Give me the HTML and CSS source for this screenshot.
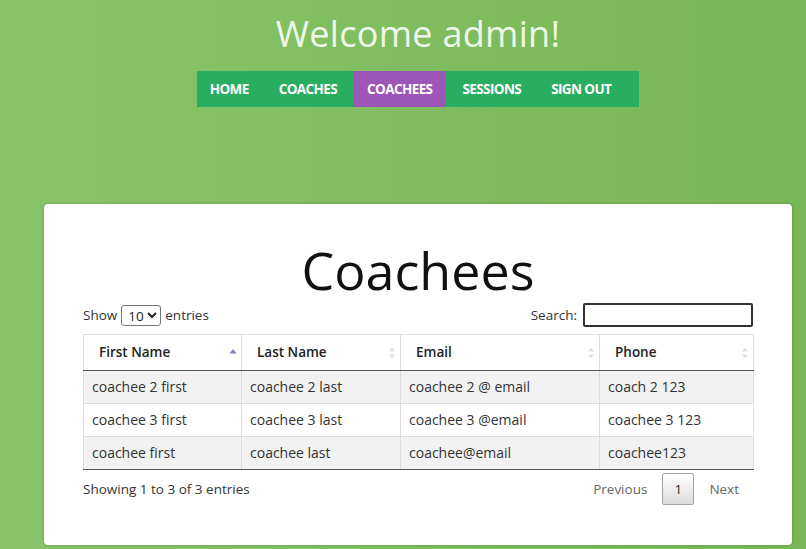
FILE: index.html
```html
<!DOCTYPE html>
<html lang="en">
<head>
<meta charset="utf-8">
<title>Coachees</title>
<link rel="stylesheet" href="styles.css">
</head>
<body>
<div class="page">
  <header class="top">
    <h1 class="welcome">Welcome admin!</h1>
    <nav class="nav">
      <a class="nav-item" href="#">HOME</a>
      <a class="nav-item" href="#">COACHES</a>
      <a class="nav-item active" href="#">COACHEES</a>
      <a class="nav-item" href="#">SESSIONS</a>
      <a class="nav-item" href="#">SIGN OUT</a>
    </nav>
  </header>
  <main class="card">
    <h2 class="card-title">Coachees</h2>
    <div class="controls">
      <label class="length">Show <select class="length-select"><option>10</option><option>25</option><option>50</option><option>100</option></select> entries</label>
      <label class="search">Search: <input class="search-input" type="search"></label>
    </div>
    <table class="dt">
      <colgroup>
        <col class="c1"><col class="c2"><col class="c3"><col class="c4">
      </colgroup>
      <thead>
        <tr>
          <th class="sort-asc">First Name<svg class="sort-icon" viewBox="0 0 8 14" width="8" height="14"><path d="M4 3 L7.5 7.5 L0.5 7.5 Z" fill="#7e7ed0"/></svg></th>
          <th>Last Name<svg class="sort-icon" viewBox="0 0 8 14" width="8" height="14"><path d="M4 1.5 L7 5.5 L1 5.5 Z M4 12.5 L7 8.5 L1 8.5 Z" fill="#dcdce4"/></svg></th>
          <th>Email<svg class="sort-icon" viewBox="0 0 8 14" width="8" height="14"><path d="M4 1.5 L7 5.5 L1 5.5 Z M4 12.5 L7 8.5 L1 8.5 Z" fill="#dcdce4"/></svg></th>
          <th>Phone<svg class="sort-icon" viewBox="0 0 8 14" width="8" height="14"><path d="M4 1.5 L7 5.5 L1 5.5 Z M4 12.5 L7 8.5 L1 8.5 Z" fill="#dcdce4"/></svg></th>
        </tr>
      </thead>
      <tbody>
        <tr class="odd"><td>coachee 2 first</td><td>coachee 2 last</td><td>coachee 2 @ email</td><td>coach 2 123</td></tr>
        <tr class="even"><td>coachee 3 first</td><td>coachee 3 last</td><td>coachee 3 @email</td><td>coachee 3 123</td></tr>
        <tr class="odd"><td>coachee first</td><td>coachee last</td><td>coachee@email</td><td>coachee123</td></tr>
      </tbody>
    </table>
    <div class="footer">
      <div class="info">Showing 1 to 3 of 3 entries</div>
      <div class="paging">
        <span class="page-link disabled">Previous</span>
        <span class="page-btn current">1</span>
        <span class="page-link disabled">Next</span>
      </div>
    </div>
  </main>
</div>
</body>
</html>
```
FILE: styles.css
```css
* { box-sizing: border-box; }
html, body { margin: 0; padding: 0; }
body {
  height: 549px;
  overflow: hidden;
  background: linear-gradient(to right, #89c36a 0%, #80bd60 50%, #78b756 100%);
  font-family: "Open Sans", "Noto Sans", sans-serif;
  color: #333;
}
.page {
  width: 748px;
  margin-left: 44px;
}
.top {
  display: flex;
  flex-direction: column;
  align-items: center;
}
.welcome {
  margin: 11px 0 0;
  font-size: 36px;
  font-weight: 400;
  line-height: 46px;
  color: #eef7e8;
  letter-spacing: 0.3px;
}
.nav {
  display: flex;
  gap: 2px;
  margin-top: 14px;
  height: 36px;
  padding-right: 14px;
  background: #29ad61;
}
.nav-item {
  display: flex;
  align-items: center;
  padding: 0 14px;
  color: #fff;
  text-decoration: none;
  font-weight: 700;
  font-size: 13.5px;
  letter-spacing: -0.6px;
}
.nav-item:first-child { padding-left: 13px; }
.nav-item.active { background: #9b56b7; }
.card {
  margin-top: 97px;
  background: #fff;
  border-radius: 4px;
  box-shadow: 0 0 3px rgba(0,0,0,0.25);
  padding: 34px 39px 40px;
}
.card-title {
  margin: 0;
  text-align: center;
  font-size: 52px;
  font-weight: 400;
  line-height: 64px;
  color: #111;
}
.controls {
  display: flex;
  justify-content: space-between;
  align-items: center;
  height: 26px;
  font-size: 13.5px;
  color: #333;
}
.length { display: flex; align-items: center; gap: 4px; }
.length-select {
  width: 40px;
  height: 21px;
  font-family: inherit;
  font-size: 13.5px;
  border: 1px solid #767676;
  border-radius: 3px;
  background: #fff;
  color: #222;
  padding: 0 0 0 2px;
}
.search { display: flex; align-items: center; gap: 6px; }
.search-input {
  width: 170px;
  height: 24px;
  border: 2px solid #333;
  border-radius: 2px;
  background: #fff;
}
.dt {
  margin-top: 6px;
  width: 670px;
  border-collapse: collapse;
  table-layout: fixed;
  font-size: 14px;
}
.c1 { width: 158px; }
.c2 { width: 159px; }
.c3 { width: 199px; }
.c4 { width: 154px; }
.dt th {
  position: relative;
  text-align: left;
  font-weight: 600;
  color: #222;
  padding: 9px 18px 9px 15px;
  line-height: 17px;
  font-size: 13.5px;
  border: 1px solid #ddd;
  border-bottom: 1px solid #555;
}
.sort-icon {
  position: absolute;
  right: 4px;
  top: 11px;
}
.dt td {
  padding: 8px 8px;
  line-height: 16px;
  border: 1px solid #ddd;
  color: #333;
}
.dt tbody tr.odd td { background: #f2f2f2; }
.dt tbody tr:last-child td { border-bottom: 1px solid #555; }
.footer {
  display: flex;
  justify-content: space-between;
  align-items: center;
  margin-top: 3px;
  font-size: 13.5px;
}
.info { color: #333; }
.paging { display: flex; align-items: center; }
.page-link {
  color: #666;
  padding: 0 15px;
}
.page-btn {
  display: flex;
  align-items: center;
  justify-content: center;
  width: 32px;
  height: 32px;
  border: 1px solid #a3a3a3;
  border-radius: 2px;
  background: linear-gradient(to bottom, #fff 0%, #dcdcdc 100%);
  color: #333;
}
.paging .page-link:last-child { padding-right: 14px; }
```
